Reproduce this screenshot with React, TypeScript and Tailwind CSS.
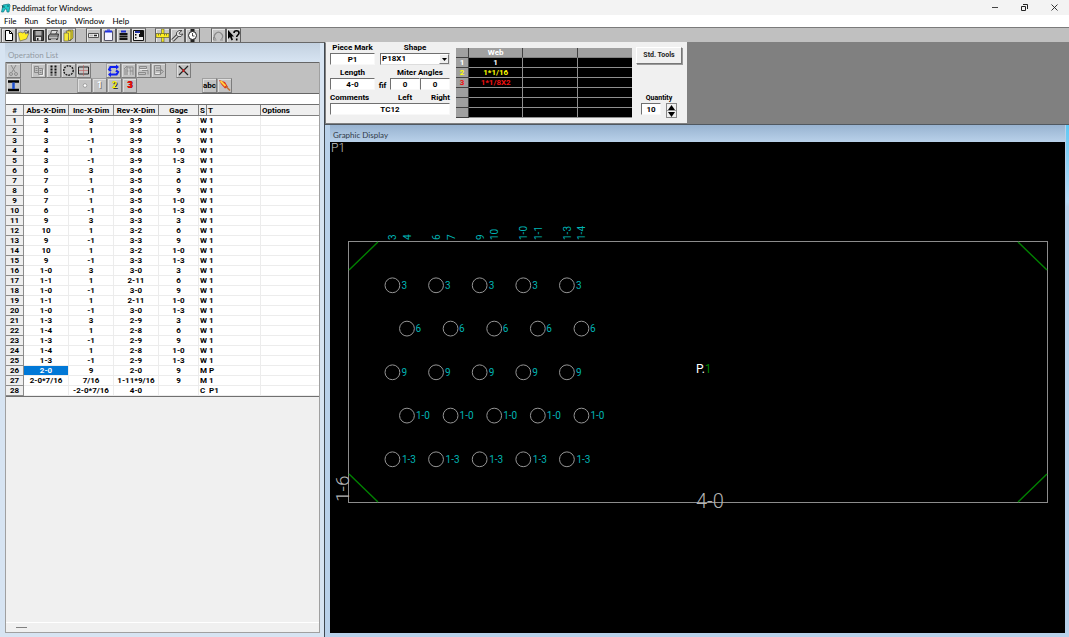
import React from 'react';

type Row = [string, string, string, string, string, string];

const ROWS: Row[] = [
  ['3', '3', '3-9', '3', 'W', '1'],
  ['4', '1', '3-8', '6', 'W', '1'],
  ['3', '-1', '3-9', '9', 'W', '1'],
  ['4', '1', '3-8', '1-0', 'W', '1'],
  ['3', '-1', '3-9', '1-3', 'W', '1'],
  ['6', '3', '3-6', '3', 'W', '1'],
  ['7', '1', '3-5', '6', 'W', '1'],
  ['6', '-1', '3-6', '9', 'W', '1'],
  ['7', '1', '3-5', '1-0', 'W', '1'],
  ['6', '-1', '3-6', '1-3', 'W', '1'],
  ['9', '3', '3-3', '3', 'W', '1'],
  ['10', '1', '3-2', '6', 'W', '1'],
  ['9', '-1', '3-3', '9', 'W', '1'],
  ['10', '1', '3-2', '1-0', 'W', '1'],
  ['9', '-1', '3-3', '1-3', 'W', '1'],
  ['1-0', '3', '3-0', '3', 'W', '1'],
  ['1-1', '1', '2-11', '6', 'W', '1'],
  ['1-0', '-1', '3-0', '9', 'W', '1'],
  ['1-1', '1', '2-11', '1-0', 'W', '1'],
  ['1-0', '-1', '3-0', '1-3', 'W', '1'],
  ['1-3', '3', '2-9', '3', 'W', '1'],
  ['1-4', '1', '2-8', '6', 'W', '1'],
  ['1-3', '-1', '2-9', '9', 'W', '1'],
  ['1-4', '1', '2-8', '1-0', 'W', '1'],
  ['1-3', '-1', '2-9', '1-3', 'W', '1'],
  ['2-0', '9', '2-0', '9', 'M', 'P'],
  ['2-0*7/16', '7/16', '1-11*9/16', '9', 'M', '1'],
  ['', '-2-0*7/16', '4-0', '', 'C', 'P1'],
];

function Icon({ children }: { children: React.ReactNode }) {
  return (
    <svg viewBox="0 0 13 13" className="block size-[13px]" fill="none" aria-hidden="true">
      {children}
    </svg>
  );
}

function MainButton({ label, children }: { label: string; children: React.ReactNode }) {
  return (
    <button
      aria-label={label}
      className="flex h-[15px] w-[15px] items-center justify-center border border-[#606060] border-t-[#8a8a8a] bg-[#c6c6c6] shadow-[inset_1px_1px_0_#e8e8e8]"
    >
      {children}
    </button>
  );
}

function ListButton({ label, children }: { label: string; children: React.ReactNode }) {
  return (
    <button
      aria-label={label}
      className="flex h-[15px] w-[15px] items-center justify-center border border-[#7c7c7c] border-t-[#a0a0a0] border-l-[#a0a0a0] bg-[#c3c3c3] text-[8px] leading-none font-bold shadow-[inset_1px_1px_0_#dedede]"
    >
      {children}
    </button>
  );
}

const CopyIcon = () => (
  <Icon>
    <path d="M2.5 2.5h4v6h-4z M6.5 4.5h4v6h-4z M7.5 6.5h2 M7.5 8.5h2 M3.5 4.5h2 M3.5 6.5h2" stroke="#888" />
    <path d="M11.5 5.5v6h-4" stroke="#eee" />
  </Icon>
);

function MainToolbar() {
  return (
    <div className="flex h-[15px] shrink-0 border-t border-[#7b7b7b] bg-[#c0c0c0] pl-px">
      <div className="flex">
        <MainButton label="New">
          <Icon>
            <path d="M3.5 1.5h4l3 3v7h-7z" fill="#fff" stroke="#000" />
            <path d="M7.5 1.5v3h3" stroke="#000" />
          </Icon>
        </MainButton>
        <MainButton label="Open">
          <Icon>
            <path d="M1 4l3-1 1 1 3.500-1v2l3.500-1-2.500 6L3 12z" fill="#ffee20" stroke="#555" strokeWidth=".6" />
            <path d="M7 2.500c2-2 3-1 4 1M11.500 1.500v2h-2" stroke="#333" strokeWidth=".8" />
          </Icon>
        </MainButton>
        <MainButton label="Save">
          <Icon>
            <path d="M1.500 1.500h10v10h-10z" fill="#444" stroke="#222" />
            <path d="M3.500 2h6v4.500h-6z" fill="#aaa" />
            <path d="M4 8h5v3.500H4z" fill="#ddd" />
            <path d="M5 9h1.500v2.500H5z" fill="#222" />
          </Icon>
        </MainButton>
        <MainButton label="Print">
          <Icon>
            <path d="M4.500 1.500h6l-2 4h-5z" fill="#ddd" stroke="#333" strokeWidth=".8" />
            <path d="M1.500 6.500l2-1.500h8l-1 5.500h-9z" fill="#888" stroke="#333" />
            <path d="M2 8.500h8.500M4 10.500h5" stroke="#ccc" strokeWidth=".8" />
          </Icon>
        </MainButton>
        <MainButton label="Reports">
          <Icon>
            <path d="M6 1h5v8l-3 3z" fill="#e8dc20" stroke="#444" strokeWidth=".6" />
            <path d="M4 2h5v8l-2 2z" fill="#ffec30" stroke="#444" strokeWidth=".6" />
            <path d="M2 4h4.500v8H2z" fill="#f5e838" stroke="#555" strokeWidth=".6" />
          </Icon>
        </MainButton>
      </div>
      <div className="ml-[10px] flex">
        <MainButton label="Piece bar">
          <Icon>
            <path d="M1.500 4.500h10v4h-10z" fill="#fff" stroke="#555" />
            <path d="M7 6.500h3" stroke="#222" strokeWidth="1.600" />
            <path d="M2.500 6.500h4" stroke="#bbb" strokeWidth="2" />
          </Icon>
        </MainButton>
        <MainButton label="Clipboard">
          <Icon>
            <path d="M2.500 2.500h8v9h-8z" fill="#f4f4ff" stroke="#556" />
            <path d="M3 2.500h7" stroke="#2030e0" strokeWidth="2" />
            <path d="M5 1h3" stroke="#2030e0" />
          </Icon>
        </MainButton>
        <MainButton label="Operation list">
          <Icon>
            <path d="M4 1.500h5v2H4z" fill="#2030d0" />
            <path d="M2.500 5h8M2.500 7.500h8M2.500 10h8" stroke="#111" strokeWidth="1.800" />
          </Icon>
        </MainButton>
        <MainButton label="Graphic display">
          <Icon>
            <path d="M1.500 1.500h10v10h-10z" fill="#eee" stroke="#111" />
            <path d="M3 3h5" stroke="#2030a0" strokeWidth="2" />
            <path d="M8 2h3v6H7V5h1zM3 5h1.500v1.500H3zM3 8h1.500v1.500H3z" fill="#111" />
          </Icon>
        </MainButton>
      </div>
      <div className="ml-[9px] flex">
        <MainButton label="Measure">
          <Icon>
            <path d="M5.500 0h2.500v13H5.500z" fill="#f4e820" stroke="#443" strokeWidth=".5" />
            <path d="M0 4.500h13v4H0z" fill="#ffee20" stroke="#443" strokeWidth=".6" />
            <path d="M2.500 5v1.500M4.500 5v1.500M8.500 5v1.500M10.500 5v1.500" stroke="#443" strokeWidth=".7" />
          </Icon>
        </MainButton>
        <MainButton label="Tools">
          <Icon>
            <path d="M1.500 11.500L7 6" stroke="#444" strokeWidth="3.500" />
            <path d="M1.500 11.500L8 5" stroke="#ddd" strokeWidth="1.500" />
            <path d="M11 1.500H8L5.500 3.500V6L7 7.500h3l2-2.500-2.500.5L8 4.500l1-1.500z" fill="#e4e4e4" stroke="#444" strokeWidth=".9" />
          </Icon>
        </MainButton>
        <MainButton label="Time">
          <Icon>
            <path d="M4.500 0h4v13h-4z" fill="#222" />
            <circle cx="6.500" cy="6.500" r="4" fill="#fff" stroke="#222" />
            <path d="M6.500 4v3h2" stroke="#222" strokeWidth=".8" />
          </Icon>
        </MainButton>
      </div>
      <div className="ml-[11px] flex">
        <MainButton label="Undo">
          <Icon>
            <path d="M3.500 10A4 4 0 1 1 9.500 10" stroke="#8b8b8b" strokeWidth="1.200" />
            <path d="M1.500 8v3h3M8 11h3" stroke="#8b8b8b" />
          </Icon>
        </MainButton>
        <MainButton label="Context help">
          <Icon>
            <path d="M1 1v9l2-2 1.500 3.500 1.500-.7L4.700 7.500H7z" fill="#000" />
            <path d="M7 4c0-3 5-3 5 0 0 2-2.300 2-2.300 4M9.700 9.500v2" stroke="#000" strokeWidth="1.600" />
          </Icon>
        </MainButton>
      </div>
    </div>
  );
}

function ListToolbars() {
  return (
    <div className="shrink-0 bg-[#c0c0c0]">
      <div className="flex h-[16px] border-t border-[#666]">
        <ListButton label="Cut">
          <Icon>
            <path d="M4 1l4 7M9 1L5 8" stroke="#8b8b8b" />
            <circle cx="4" cy="10" r="1.500" stroke="#8b8b8b" />
            <circle cx="9" cy="10" r="1.500" stroke="#8b8b8b" />
          </Icon>
        </ListButton>
        <div className="ml-[10px] flex">
          <ListButton label="Copy"><CopyIcon /></ListButton>
          <ListButton label="Hole pattern">
            <Icon>
              <path d="M4.500 1.500v10M8.500 1.500v10" stroke="#111" strokeWidth="2" strokeDasharray="2 1" />
            </Icon>
          </ListButton>
          <ListButton label="Bolt circle">
            <Icon>
              <circle cx="6.500" cy="6.500" r="4.700" stroke="#111" strokeWidth="1.400" strokeDasharray="1.800 1" />
            </Icon>
          </ListButton>
          <ListButton label="Rectangle">
            <Icon>
              <path d="M1.500 3h10v7h-10z" stroke="#222" />
              <path d="M6.500 1v11M2 6.500h9" stroke="#c06060" strokeWidth=".6" />
            </Icon>
          </ListButton>
        </div>
        <div className="ml-[15px] flex">
          <ListButton label="Flip">
            <Icon>
              <path d="M10.500 3H3.500L2.200 5.500 4 7M2.500 10.500h7l1.500-2.500L9 6.500" stroke="#1020f0" strokeWidth="2.200" />
              <path d="M9 .5L12 3 9 5.500zM4 8L1 10.500 4 13z" fill="#1020f0" />
            </Icon>
          </ListButton>
          <ListButton label="Rotate">
            <Icon>
              <path d="M2 5l3-3v9M5 3h6v8M8 3v8M3 5v6M5 7h6" stroke="#8b8b8b" />
              <path d="M7 5v6" stroke="#eee" strokeWidth=".8" />
            </Icon>
          </ListButton>
          <ListButton label="Align">
            <Icon>
              <path d="M2.500 2.500h7v2h-7zM1.500 8.500h7v2h-7zM5 6.500h6v4" stroke="#8b8b8b" />
              <path d="M3 5.500h7" stroke="#eee" />
            </Icon>
          </ListButton>
          <ListButton label="Insert">
            <Icon>
              <path d="M2.500 1.500h6v9h-6zM4 4h5M4 6.500h6M8.500 5l3 2.500-3 2.500" stroke="#8b8b8b" />
              <path d="M3.500 9.500h4" stroke="#eee" />
            </Icon>
          </ListButton>
        </div>
        <div className="ml-[10px] flex">
          <ListButton label="Delete">
            <Icon>
              <path d="M2 2l9 9M11 2l-9 9" stroke="#222" strokeWidth="1.200" />
              <path d="M5.500 5.500l2 2M7.500 5.500l-2 2" stroke="#d02020" strokeWidth="1.200" />
            </Icon>
          </ListButton>
        </div>
      </div>
      <div className="flex h-[15px]">
        <ListButton label="Beam section">
          <Icon>
            <path d="M1 2.500h11M1 11h11" stroke="#000" strokeWidth="2.400" />
            <path d="M6.500 3.500v6.500" stroke="#1e50d0" strokeWidth="2.500" />
          </Icon>
        </ListButton>
        <div className="ml-[56px] flex">
          <ListButton label="No tool">
            <Icon>
              <circle cx="7" cy="6.500" r="1.800" fill="#fff" stroke="#888" strokeWidth=".7" />
            </Icon>
          </ListButton>
          <ListButton label="Tool 1"><span className="text-[9px] text-white [text-shadow:1px_1px_0_#777]">1</span></ListButton>
          <ListButton label="Tool 2"><span className="text-[9px] text-[#f0f000] [text-shadow:1px_1px_0_#333]">2</span></ListButton>
          <ListButton label="Tool 3"><span className="text-[9px] text-[#f00000] [text-shadow:1px_0_0_#800]">3</span></ListButton>
        </div>
        <div className="ml-[65px] flex">
          <ListButton label="Text"><span>abc</span></ListButton>
          <ListButton label="Mark">
            <Icon>
              <path d="M1 1l6 2 3 5-3 1.500L3 5z" fill="#e03018" />
              <path d="M2.500 2l5 5" stroke="#ffd040" strokeWidth="2" />
              <path d="M8 7.500l4 4" stroke="#c07030" strokeWidth="1.600" />
            </Icon>
          </ListButton>
        </div>
      </div>
    </div>
  );
}

const HEAD = 'h-[11px] overflow-hidden border-r border-b border-[#808080] bg-[#efefef] p-0 text-center font-bold';
const CELL = 'h-[10px] overflow-hidden border-r border-b border-[#ececec] p-0 text-center';

function OperationTable() {
  return (
    <table className="w-full table-fixed border-separate border-spacing-0 border-t border-b border-[#707070] bg-white text-[8px] leading-[9px] font-bold whitespace-nowrap">
      <colgroup>
        <col className="w-[18px]" />
        <col className="w-[45px]" />
        <col className="w-[45px]" />
        <col className="w-[45px]" />
        <col className="w-[40px]" />
        <col className="w-[8px]" />
        <col className="w-[54px]" />
        <col />
      </colgroup>
      <thead>
        <tr>
          <th className={HEAD}>#</th>
          <th className={HEAD}>Abs-X-Dim</th>
          <th className={HEAD}>Inc-X-Dim</th>
          <th className={HEAD}>Rev-X-Dim</th>
          <th className={HEAD}>Gage</th>
          <th className={HEAD}>S</th>
          <th className="h-[11px] border-r border-b border-[#808080] bg-[#efefef] p-0 pl-px text-left">T</th>
          <th className="h-[11px] border-b border-[#808080] bg-[#efefef] p-0 pl-px text-left">Options</th>
        </tr>
      </thead>
      <tbody>
        {ROWS.map((r, i) => (
          <tr key={i}>
            <th className="h-[10px] border-r border-b border-[#8c8c8c] bg-[#efefef] p-0 text-center">{i + 1}</th>
            <td className={i === 25 ? 'h-[10px] border-r border-b border-[#ececec] bg-[#0078d7] p-0 text-center text-white' : CELL}>
              {r[0]}
            </td>
            <td className={CELL}>{r[1]}</td>
            <td className={CELL}>{r[2]}</td>
            <td className={CELL}>{r[3]}</td>
            <td className="h-[10px] overflow-hidden border-b border-[#ececec] p-0 pl-px text-left">{r[4]}</td>
            <td className="h-[10px] border-r border-b border-[#ececec] p-0 pl-[2px] text-left">{r[5]}</td>
            <td className="h-[10px] border-b border-[#ececec] p-0" />
          </tr>
        ))}
      </tbody>
    </table>
  );
}

function OperationWindow() {
  return (
    <section className="flex w-[325px] shrink-0 flex-col border-t border-r border-t-[#686868] border-r-[#404850] bg-[#d7e4f2] pr-[4px] pb-[4px] pl-[5px]">
      <h2 className="flex h-[19px] shrink-0 items-center bg-linear-to-b from-[#c3d1e0] to-[#d7e4f2] pt-[5px] pl-[3px] font-['Lato','Liberation_Sans',sans-serif] text-[8px] leading-[10px] text-[#939ba4]">
        Operation List
      </h2>
      <div className="flex min-h-0 flex-1 flex-col border border-t-0 border-[#a0a0a0] bg-[#f0f0f0]">
        <ListToolbars />
        <input aria-label="Entry" className="block h-[11px] w-full shrink-0 border-t border-[#666] bg-white px-1 text-[8px] outline-none" />
        <OperationTable />
        <div className="flex-1" />
        <div className="flex h-[10px] shrink-0 items-center border-t border-white pl-[10px]">
          <div className="h-px w-[11px] bg-[#808080]" />
        </div>
      </div>
    </section>
  );
}

const FIELD =
  'block h-[12px] w-full min-w-0 border border-t-[#707070] border-l-[#707070] border-r-[#f8f8f8] border-b-[#f8f8f8] bg-white p-0 text-center text-[8px] leading-[10px] font-bold outline-none';
const LABEL = 'block h-[10px] text-center text-[8px] leading-[10px] font-bold whitespace-nowrap';

const TOOLS = [
  { n: '1', web: '1', color: 'text-white' },
  { n: '2', web: '1*1/16', color: 'text-[#ffff00]' },
  { n: '3', web: '1*1/8X2', color: 'text-[#f01010]' },
  { n: '', web: '', color: 'text-white' },
  { n: '', web: '', color: 'text-white' },
  { n: '', web: '', color: 'text-white' },
];

function PiecePanel() {
  return (
    <form className="flex h-[82px] w-[362px] items-start border-t border-b border-l border-t-[#f0f0f0] border-b-[#808080] border-l-[#808080] bg-[#f0f0f0] pl-[4px]">
      <div className="flex w-[120px] flex-col gap-[3px]">
        <div className="flex justify-between">
          <div className="w-[45px]">
            <label htmlFor="mark" className={LABEL}>Piece Mark</label>
            <input id="mark" defaultValue="P1" className={FIELD} />
          </div>
          <div className="w-[70px]">
            <label htmlFor="shape" className={LABEL}>Shape</label>
            <div className="relative">
              <select
                id="shape"
                className="block h-[12px] w-full appearance-none border border-t-[#707070] border-l-[#707070] border-r-[#ddd] border-b-[#ddd] bg-white p-0 pl-px text-[8px] leading-[10px] font-bold outline-none"
              >
                <option>P18X1</option>
              </select>
              <span className="pointer-events-none absolute top-px right-px flex h-[10px] w-[10px] items-center justify-center border border-t-white border-l-white border-r-[#777] border-b-[#777] bg-[#eee]">
                <svg viewBox="0 0 5 3" className="h-[3px] w-[5px]"><path d="M0 0h5L2.500 3z" /></svg>
              </span>
            </div>
          </div>
        </div>
        <div className="flex justify-between">
          <div className="w-[45px]">
            <label htmlFor="length" className={LABEL}>Length</label>
            <input id="length" defaultValue="4-0" className={FIELD} />
          </div>
          <div className="self-end text-[8px] leading-[9px] font-bold">fif</div>
          <fieldset className="w-[60px]">
            <legend className="block h-[10px] w-full text-center text-[8px] leading-[10px] font-bold">Miter Angles</legend>
            <div className="flex">
              <input id="left" defaultValue="0" className={FIELD} />
              <input id="right" defaultValue="0" className={FIELD} />
            </div>
          </fieldset>
        </div>
        <div>
          <div className="flex">
            <label htmlFor="comments" className={LABEL}>Comments</label>
            <span className="flex-1" />
            <label htmlFor="left" className="w-[30px] text-center text-[8px] leading-[10px] font-bold">Left</label>
            <label htmlFor="right" className="w-[30px] text-right text-[8px] leading-[10px] font-bold">Right</label>
          </div>
          <input id="comments" defaultValue="TC12" className={FIELD} />
        </div>
      </div>
      <table className="mt-[5px] ml-[6px] w-[176px] table-fixed border-separate border-spacing-0 bg-black text-[8px] leading-[9px] font-bold">
        <colgroup>
          <col className="w-[13px]" />
          <col />
          <col />
          <col />
        </colgroup>
        <thead>
          <tr className="bg-[#a0a0a0] text-white">
            <th className="h-[10px] border-r border-b border-r-[#404040] border-b-[#404040] p-0" />
            <th className="h-[10px] border-r border-b border-r-[#404040] border-b-[#808080] p-0">Web</th>
            <th className="h-[10px] border-r border-b border-r-[#404040] border-b-[#808080] p-0" />
            <th className="h-[10px] border-b border-b-[#808080] p-0" />
          </tr>
        </thead>
        <tbody className="text-center">
          {TOOLS.map((t, i) => (
            <tr key={i} className={t.color}>
              <th className="h-[10px] border-r border-b border-r-[#404040] border-b-[#404040] bg-[#a0a0a0] p-0">{t.n}</th>
              <td className="h-[10px] border-r border-b border-[#909090] p-0">{t.web}</td>
              <td className="h-[10px] border-r border-b border-[#909090] p-0" />
              <td className="h-[10px] border-b border-[#909090] p-0" />
            </tr>
          ))}
        </tbody>
      </table>
      <div className="ml-[4px] flex w-[46px] flex-col pt-[4px]">
        <button
          type="button"
          className="h-[17px] border border-t-white border-l-white border-r-[#777] border-b-[#777] bg-[#f0f0f0] text-[7px] leading-none font-bold whitespace-nowrap text-[#222] shadow-[1px_1px_0_#999]"
        >
          Std. Tools
        </button>
        <label htmlFor="qty" className="mt-[29px] text-center text-[7px] leading-[10px] font-bold">Quantity</label>
        <div className="flex gap-[5px] pl-[5px]">
          <div className="w-[20px]">
            <input id="qty" defaultValue="10" className={FIELD} />
          </div>
          <div className="flex h-[15px] w-[11px] flex-col border border-[#888]">
            <button type="button" aria-label="Increase quantity" className="flex flex-1 items-center justify-center border-b border-[#999]">
              <svg viewBox="0 0 7 5" className="h-[5px] w-[7px]"><path d="M0 5h7L3.500 0z" /></svg>
            </button>
            <button type="button" aria-label="Decrease quantity" className="flex flex-1 items-center justify-center">
              <svg viewBox="0 0 7 5" className="h-[5px] w-[7px]"><path d="M0 0h7L3.500 5z" /></svg>
            </button>
          </div>
        </div>
      </div>
    </form>
  );
}

const ORIGIN_X = 18.8;
const INCH = 14.54;
const px = (inches: number) => ORIGIN_X + inches * INCH;

const HOLE_ROWS = [
  { y: 143.3, first: 3, label: '3', dx: 9 },
  { y: 186.6, first: 4, label: '6', dx: 8.5 },
  { y: 230.3, first: 3, label: '9', dx: 9 },
  { y: 273.6, first: 4, label: '1-0', dx: 9 },
  { y: 317.3, first: 3, label: '1-3', dx: 9.5 },
];

const X_LABELS: [number, string][] = [
  [3, '3'], [4, '4'], [6, '6'], [7, '7'], [9, '9'], [10, '10'],
  [12, '1-0'], [13, '1-1'], [15, '1-3'], [16, '1-4'],
];

function Drawing() {
  return (
    <svg viewBox="0 0 735 488" preserveAspectRatio="xMinYMin meet" className="block h-full w-full font-light" fill="none">
      <text x="1" y="10" fontSize="12" fill="#c8c8c8">P1</text>
      <rect x="18.5" y="99.500" width="699" height="261" stroke="#8c8c8c" />
      <path d="M48 100L19 128M688 100l29 28M19 332l29 28M688 360l29-28" stroke="#008000" strokeWidth="1.400" />
      <g fontSize="10" fontWeight="400">
        {X_LABELS.map(([n, t]) => (
          <text key={n} fill="#00b4b4" transform={`translate(${px(n) + 4} 98) rotate(-90)`}>{t}</text>
        ))}
        {HOLE_ROWS.map((row) =>
          [0, 3, 6, 9, 12].map((d) => (
            <g key={`${row.label}-${d}`}>
              <circle cx={px(row.first + d)} cy={row.y} r="7.400" stroke="#959595" strokeWidth="1" />
              <text x={px(row.first + d) + row.dx} y={row.y + 3.5} fill="#00b4b4">{row.label}</text>
            </g>
          )),
        )}
      </g>
      <text x="366" y="231" fontSize="12" fontWeight="400" fill="#fff">
        P.<tspan fill="#008000">1</tspan>
      </text>
      <text x="366" y="366" fontSize="20" fill="#b4b4b4">4-0</text>
      <text transform="translate(19 360) rotate(-90)" fontSize="19" fill="#b4b4b4">1-6</text>
    </svg>
  );
}

function GraphicWindow() {
  return (
    <section className="flex min-h-0 flex-1 border-t border-[#505860]">
      <div className="flex min-w-0 flex-1 flex-col bg-[#b9d1ea] pr-px pb-[4px] pl-[5px]">
        <h2 className="flex h-[17px] shrink-0 items-center bg-linear-to-b from-[#98b3d0] to-[#b9d1ea] pt-[3px] pl-[3px] font-['Lato','Liberation_Sans',sans-serif] text-[8px] leading-[10px] text-[#303a48]">
          Graphic Display
        </h2>
        <div className="min-h-0 flex-1 overflow-hidden bg-black">
          <Drawing />
        </div>
      </div>
      <div className="w-[3px] bg-linear-to-b from-[#5cc8f4] from-0% via-[#b9dcf8] via-15% to-[#b9d1ea] to-16%" />
    </section>
  );
}

export default function App() {
  return (
    <div className="flex h-screen flex-col overflow-hidden bg-[#808080] font-['Roboto','Liberation_Sans',sans-serif] text-black">
      <header className="flex h-[15px] shrink-0 items-center bg-[#f3f3f3] pl-px">
        <svg viewBox="0 0 10 10" className="size-[10px]" aria-hidden="true">
          <path d="M2 2l6-1 1 1-1 7H6l-.500-3H4L2.500 9H.5z" fill="#20c8c8" stroke="#107080" strokeWidth=".7" />
          <path d="M1 4h3M1 2l1 2M6 3h2" stroke="#063c44" strokeWidth=".7" />
        </svg>
        <h1 className="pl-px font-['Lato','Liberation_Sans',sans-serif] text-[8px] leading-[10px]">Peddimat for Windows</h1>
        <div className="ml-auto flex items-center">
          <button aria-label="Minimize" className="flex h-[15px] w-[29px] items-center justify-center">
            <svg viewBox="0 0 7 7" className="size-[7px]"><path d="M0 3.500h6" stroke="#444" /></svg>
          </button>
          <button aria-label="Restore" className="flex h-[15px] w-[29px] items-center justify-center">
            <svg viewBox="0 0 7 7" className="size-[7px]" fill="none" stroke="#222">
              <path d="M.5 2.500h4v4h-4zM2 .5h4.500V5" />
            </svg>
          </button>
          <button aria-label="Close" className="flex h-[15px] w-[30px] items-center justify-center">
            <svg viewBox="0 0 7 7" className="size-[7px]"><path d="M.5.5l6 6M6.500.5l-6 6" stroke="#222" strokeWidth=".9" /></svg>
          </button>
        </div>
      </header>
      <nav className="flex h-[12px] shrink-0 items-center gap-[8px] bg-white pl-[4px] font-['Lato','Liberation_Sans',sans-serif] text-[8px] leading-[11px]">
        <button>File</button>
        <button>Run</button>
        <button>Setup</button>
        <button>Window</button>
        <button>Help</button>
      </nav>
      <MainToolbar />
      <main className="flex min-h-0 flex-1">
        <OperationWindow />
        <div className="flex min-w-0 flex-1 flex-col">
          <PiecePanel />
          <GraphicWindow />
        </div>
      </main>
    </div>
  );
}
